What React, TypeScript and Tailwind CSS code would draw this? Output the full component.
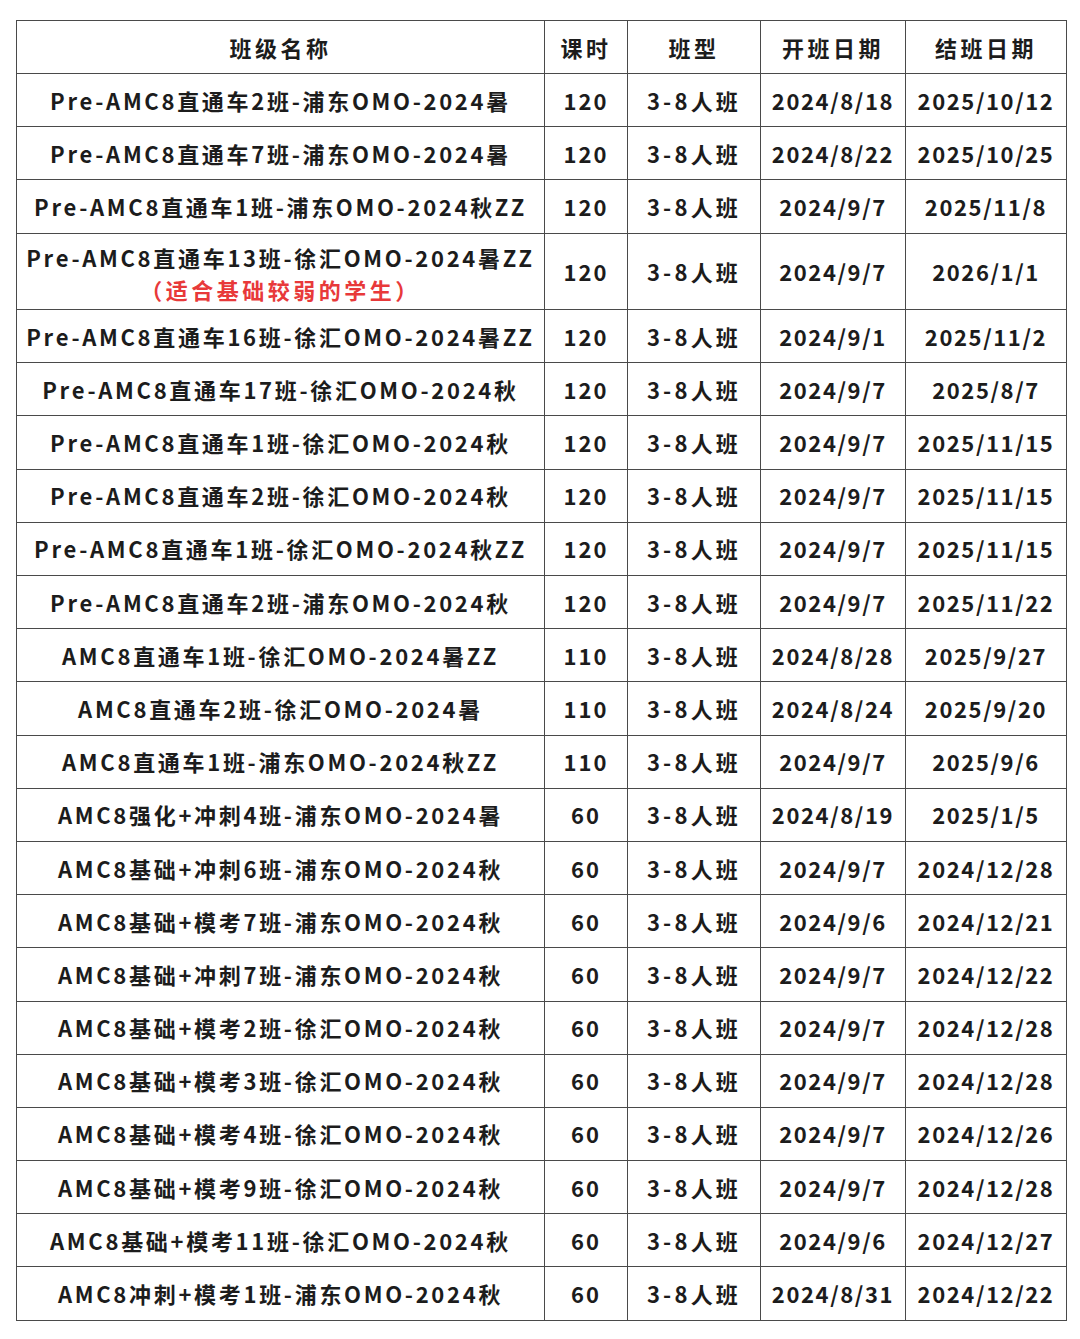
const ROWS: [string, string, string, string][] = [
  ["Pre-AMC8直通车2班-浦东OMO-2024暑", "120", "2024/8/18", "2025/10/12"],
  ["Pre-AMC8直通车7班-浦东OMO-2024暑", "120", "2024/8/22", "2025/10/25"],
  ["Pre-AMC8直通车1班-浦东OMO-2024秋ZZ", "120", "2024/9/7", "2025/11/8"],
  ["Pre-AMC8直通车13班-徐汇OMO-2024暑ZZ", "120", "2024/9/7", "2026/1/1"],
  ["Pre-AMC8直通车16班-徐汇OMO-2024暑ZZ", "120", "2024/9/1", "2025/11/2"],
  ["Pre-AMC8直通车17班-徐汇OMO-2024秋", "120", "2024/9/7", "2025/8/7"],
  ["Pre-AMC8直通车1班-徐汇OMO-2024秋", "120", "2024/9/7", "2025/11/15"],
  ["Pre-AMC8直通车2班-徐汇OMO-2024秋", "120", "2024/9/7", "2025/11/15"],
  ["Pre-AMC8直通车1班-徐汇OMO-2024秋ZZ", "120", "2024/9/7", "2025/11/15"],
  ["Pre-AMC8直通车2班-浦东OMO-2024秋", "120", "2024/9/7", "2025/11/22"],
  ["AMC8直通车1班-徐汇OMO-2024暑ZZ", "110", "2024/8/28", "2025/9/27"],
  ["AMC8直通车2班-徐汇OMO-2024暑", "110", "2024/8/24", "2025/9/20"],
  ["AMC8直通车1班-浦东OMO-2024秋ZZ", "110", "2024/9/7", "2025/9/6"],
  ["AMC8强化+冲刺4班-浦东OMO-2024暑", "60", "2024/8/19", "2025/1/5"],
  ["AMC8基础+冲刺6班-浦东OMO-2024秋", "60", "2024/9/7", "2024/12/28"],
  ["AMC8基础+模考7班-浦东OMO-2024秋", "60", "2024/9/6", "2024/12/21"],
  ["AMC8基础+冲刺7班-浦东OMO-2024秋", "60", "2024/9/7", "2024/12/22"],
  ["AMC8基础+模考2班-徐汇OMO-2024秋", "60", "2024/9/7", "2024/12/28"],
  ["AMC8基础+模考3班-徐汇OMO-2024秋", "60", "2024/9/7", "2024/12/28"],
  ["AMC8基础+模考4班-徐汇OMO-2024秋", "60", "2024/9/7", "2024/12/26"],
  ["AMC8基础+模考9班-徐汇OMO-2024秋", "60", "2024/9/7", "2024/12/28"],
  ["AMC8基础+模考11班-徐汇OMO-2024秋", "60", "2024/9/6", "2024/12/27"],
  ["AMC8冲刺+模考1班-浦东OMO-2024秋", "60", "2024/8/31", "2024/12/22"],
];

const HEADERS = ["班级名称", "课时", "班型", "开班日期", "结班日期"];

const cell = "border-[1.5px] border-[#4a4a4a] text-center align-middle p-0 whitespace-nowrap";

export default function App() {
  return (
    <div
      className="min-h-[1339px] w-[1080px] bg-white pl-[16px] pt-[20px] text-[#1c1c1c]"
      style={{ fontFamily: '"Noto Sans CJK SC", "Noto Sans", sans-serif' }}
    >
      <table className="w-[1050px] table-fixed border-collapse text-[22px] font-bold">
        <colgroup>
          <col className="w-[528px]" />
          <col className="w-[83px]" />
          <col className="w-[133px]" />
          <col className="w-[145px]" />
          <col className="w-[161px]" />
        </colgroup>
        <thead>
          <tr className="h-[53px]">
            {HEADERS.map((h) => (
              <th key={h} className={`${cell} font-bold tracking-[3.5px]`}>
                {h}
              </th>
            ))}
          </tr>
        </thead>
        <tbody>
          {ROWS.map(([name, hours, start, end], i) => (
            <tr key={i} className={i === 3 ? "h-[76.5px]" : "h-[53.2px]"}>
              <td className={`${cell} tracking-[2.7px]`}>
                {i === 3 ? (
                  <div className="pt-[3px] leading-[32px]">
                    <div>{name}</div>
                    <div className="tracking-[3.5px] text-[#e8393a]">（适合基础较弱的学生）</div>
                  </div>
                ) : (
                  name
                )}
              </td>
              <td className={`${cell} tracking-[2px]`}>{hours}</td>
              <td className={`${cell} tracking-[3.2px]`}>3-8人班</td>
              <td className={`${cell} tracking-[1.6px]`}>{start}</td>
              <td className={`${cell} tracking-[1.6px]`}>{end}</td>
            </tr>
          ))}
        </tbody>
      </table>
    </div>
  );
}
